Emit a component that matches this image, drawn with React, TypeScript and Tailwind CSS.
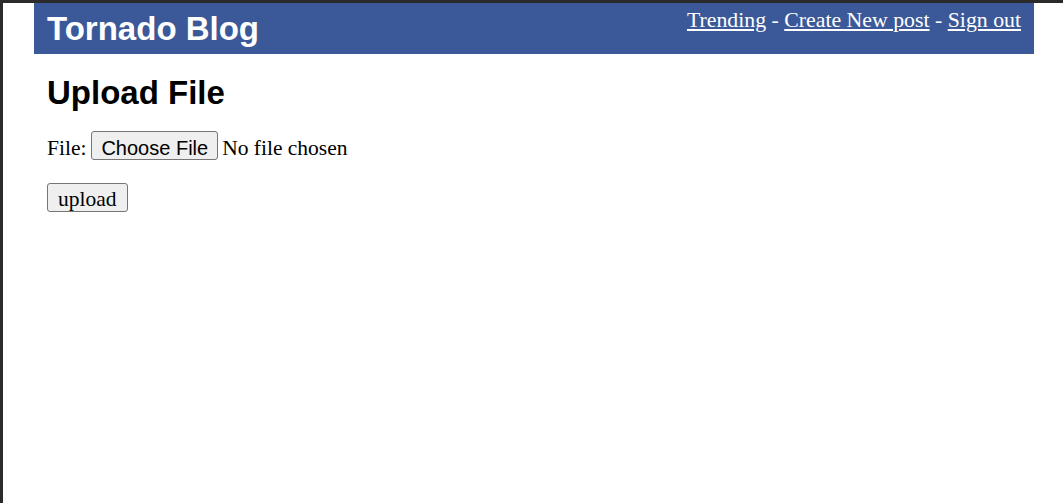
export default function App() {
    return (
        <div className="h-screen w-full overflow-hidden border-t-[3px] border-l-[3px] border-[#2b2b2b] bg-white">
            <div className="ml-[31px] w-[1000px]">
                <header className="flex h-[51px] items-start justify-between bg-[#3b5998] px-[13px] text-white">
                    <h1 className="pt-[9px] font-['Liberation_Sans',Arial,sans-serif] text-[33px] leading-[33px] font-bold">
                        Tornado Blog
                    </h1>
                    <nav className="pt-[6px] font-['Liberation_Serif','Times_New_Roman',serif] text-[21.8px] leading-[22px]">
                        <a href="#" className="underline">Trending</a>
                        {' - '}
                        <a href="#" className="underline">Create New post</a>
                        {' - '}
                        <a href="#" className="underline">Sign out</a>
                    </nav>
                </header>
                <main className="px-[13px] font-['Liberation_Serif','Times_New_Roman',serif] text-[21.5px] text-black">
                    <h1 className="mt-[22px] font-['Liberation_Sans',Arial,sans-serif] text-[33px] leading-[33px] font-bold">
                        Upload File
                    </h1>
                    <form className="flex flex-col items-start">
                        <div className="mt-[22px] flex items-baseline">
                            <span className="leading-[24px]">File:</span>
                            <button
                                type="button"
                                className="ml-[5px] h-[29px] rounded-[3px] border border-[#767676] bg-[#efefef] px-[9px] pt-[4px] font-['Liberation_Sans',Arial,sans-serif] text-[20px] leading-[20px] text-black"
                            >
                                Choose File
                            </button>
                            <span className="ml-[4px] leading-[24px]">No file chosen</span>
                        </div>
                        <button
                            type="submit"
                            className="mt-[23px] h-[29px] rounded-[3px] border border-[#767676] bg-[#efefef] px-[10px] pt-[3px] text-[21.5px] leading-[21px] text-black"
                        >
                            upload
                        </button>
                    </form>
                </main>
            </div>
        </div>
    )
}
